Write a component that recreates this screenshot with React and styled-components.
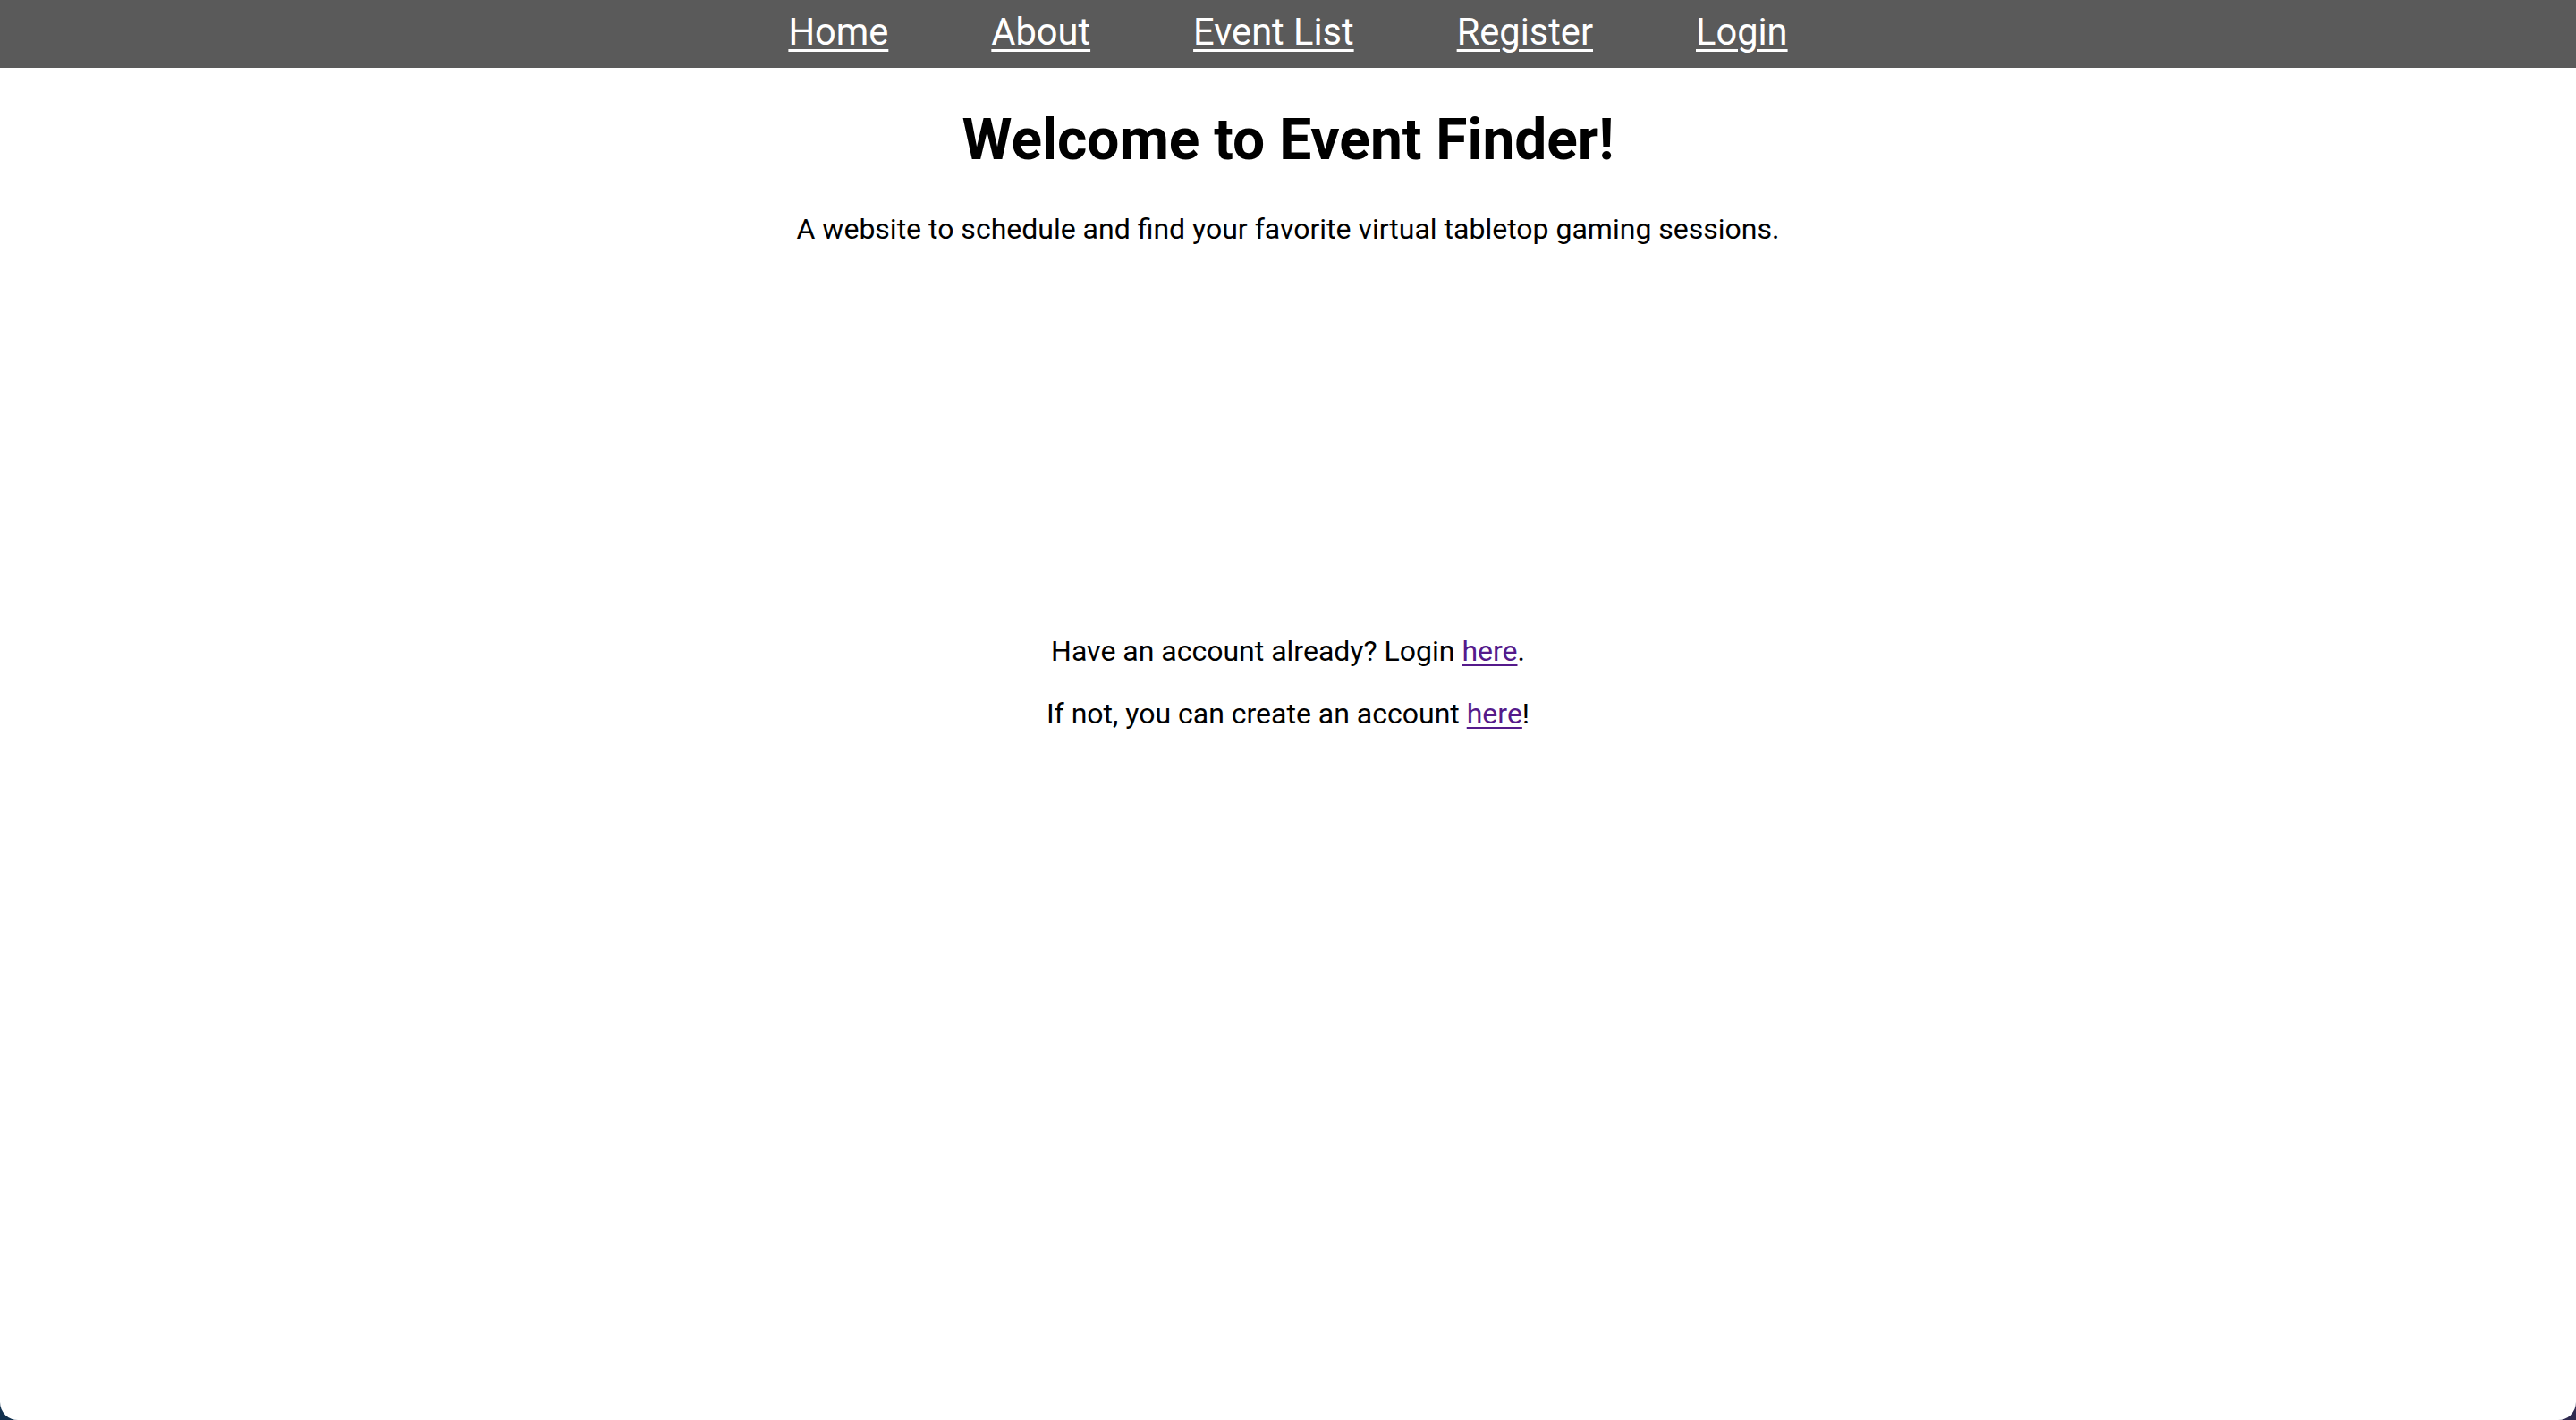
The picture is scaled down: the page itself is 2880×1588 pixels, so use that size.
import styled, { createGlobalStyle } from "styled-components";

const GlobalStyle = createGlobalStyle`
  html, body {
    margin: 0;
    padding: 0;
    height: 100%;
    background: linear-gradient(to right, #12314f, #2f2a50);
  }
  body {
    font-family: Roboto, "Liberation Sans", sans-serif;
    font-size: 32px;
    color: #000;
  }
`;

const Page = styled.div`
  min-height: 100vh;
  background: #fff;
  border-radius: 0 0 20px 20px;
  overflow: hidden;
`;

const NavBar = styled.nav`
  display: flex;
  justify-content: center;
  gap: 115px;
  background: #5a5a5a;
  padding: 11px 0 16px;
  height: 49px;
`;

const NavLink = styled.a`
  color: #fff;
  font-size: 41.6px;
  line-height: normal;
  text-decoration: underline;
  text-decoration-thickness: 3px;
  text-underline-offset: 5px;
  cursor: pointer;
`;

const Main = styled.main`
  text-align: center;
`;

const Title = styled.h1`
  font-size: 64px;
  font-weight: 700;
  margin: 0.67em 0;
`;

const Text = styled.p`
  margin: 1em 0;
  line-height: normal;
`;

const Spacer = styled.div`
  height: 370px;
`;

const InlineLink = styled.a`
  color: #551a8b;
  text-decoration: underline;
  text-decoration-thickness: 2px;
  text-underline-offset: 4px;
`;

function App() {
  return (
    <Page>
      <GlobalStyle />
      <NavBar>
        <NavLink href="#">Home</NavLink>
        <NavLink href="#">About</NavLink>
        <NavLink href="#">Event List</NavLink>
        <NavLink href="#">Register</NavLink>
        <NavLink href="#">Login</NavLink>
      </NavBar>
      <Main>
        <Title>Welcome to Event Finder!</Title>
        <Text>
          A website to schedule and find your favorite virtual tabletop gaming
          sessions.
        </Text>
        <Spacer />
        <Text>
          Have an account already? Login <InlineLink href="#">here</InlineLink>.
        </Text>
        <Text>
          If not, you can create an account{" "}
          <InlineLink href="#">here</InlineLink>!
        </Text>
      </Main>
    </Page>
  );
}

export default App;
